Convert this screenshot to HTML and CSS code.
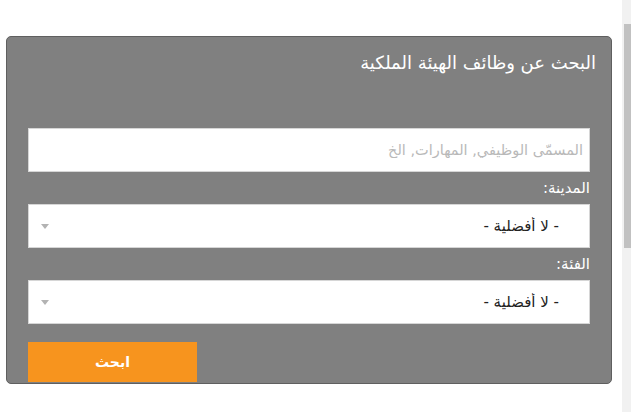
FILE: index.html
```html
<!DOCTYPE html>
<html lang="ar">
<head>
<meta charset="utf-8">
<link rel="stylesheet" href="styles.css">
</head>
<body>
<div class="page">
  <main class="main">
    <section class="panel" dir="rtl">
      <h2 class="title">البحث عن وظائف الهيئة الملكية</h2>
      <form class="form">
        <input class="field" type="text" placeholder="المسمّى الوظيفي, المهارات, الخ">
        <label class="label">المدينة:</label>
        <div class="select-wrap">
          <select class="select"><option>- لا أفضلية -</option></select>
        </div>
        <label class="label">الفئة:</label>
        <div class="select-wrap">
          <select class="select"><option>- لا أفضلية -</option></select>
        </div>
        <div class="actions">
          <button type="button" class="btn">ابحث</button>
        </div>
      </form>
    </section>
  </main>
  <div class="scrollbar"><div class="thumb"></div></div>
</div>
</body>
</html>
```

FILE: styles.css
```css
html, body {
  margin: 0;
  padding: 0;
  background: #fff;
}
.page {
  display: flex;
  width: 631px;
  height: 412px;
  overflow: hidden;
}
.main {
  flex: 1;
  padding: 36px 0 0 6px;
}
.panel {
  box-sizing: border-box;
  width: 606px;
  height: 348px;
  background: #808080;
  border: 1px solid #5f5f5f;
  border-radius: 5px;
  font-family: "DejaVu Sans", sans-serif;
}
.title {
  margin: 0;
  padding: 13px 15px 0;
  font-size: 18px;
  font-weight: normal;
  line-height: 26px;
  color: #fff;
}
.form {
  display: flex;
  flex-direction: column;
  padding: 52px 21px 0;
}
.field {
  box-sizing: border-box;
  height: 44px;
  width: 100%;
  margin: 0;
  border: 1px solid #d6d6d6;
  padding: 0 6px;
  font-family: "DejaVu Sans", sans-serif;
  font-size: 14.5px;
  color: #333;
  background: #fff;
  outline: none;
}
.field::placeholder {
  color: #b9b9b9;
}
.label {
  display: block;
  height: 32px;
  line-height: 32px;
  font-size: 15px;
  color: #fff;
}
.select-wrap {
  position: relative;
}
.select-wrap::after {
  content: "";
  position: absolute;
  left: 13px;
  top: 20px;
  border-left: 4px solid transparent;
  border-right: 4px solid transparent;
  border-top: 5px solid #b3b3b3;
  pointer-events: none;
}
.select {
  box-sizing: border-box;
  display: block;
  width: 100%;
  height: 44px;
  margin: 0;
  padding: 0 30px 0 30px;
  border: 1px solid #d6d6d6;
  border-radius: 0;
  background: #fff;
  -webkit-appearance: none;
  appearance: none;
  font-family: "DejaVu Sans", sans-serif;
  font-size: 15px;
  color: #222;
  outline: none;
}
.actions {
  display: flex;
  justify-content: flex-end;
  padding-top: 18px;
}
.btn {
  width: 169px;
  height: 40px;
  margin: 0;
  border: none;
  background: #f7941e;
  color: #fff;
  font-family: "DejaVu Sans", sans-serif;
  font-size: 14px;
  font-weight: bold;
  cursor: pointer;
}
.scrollbar {
  width: 9px;
  margin-left: 10px;
  background: #f1f1f1;
  position: relative;
}
.thumb {
  margin: 24px 0 0 2px;
  width: 7px;
  height: 224px;
  background: #c1c1c1;
}
```
